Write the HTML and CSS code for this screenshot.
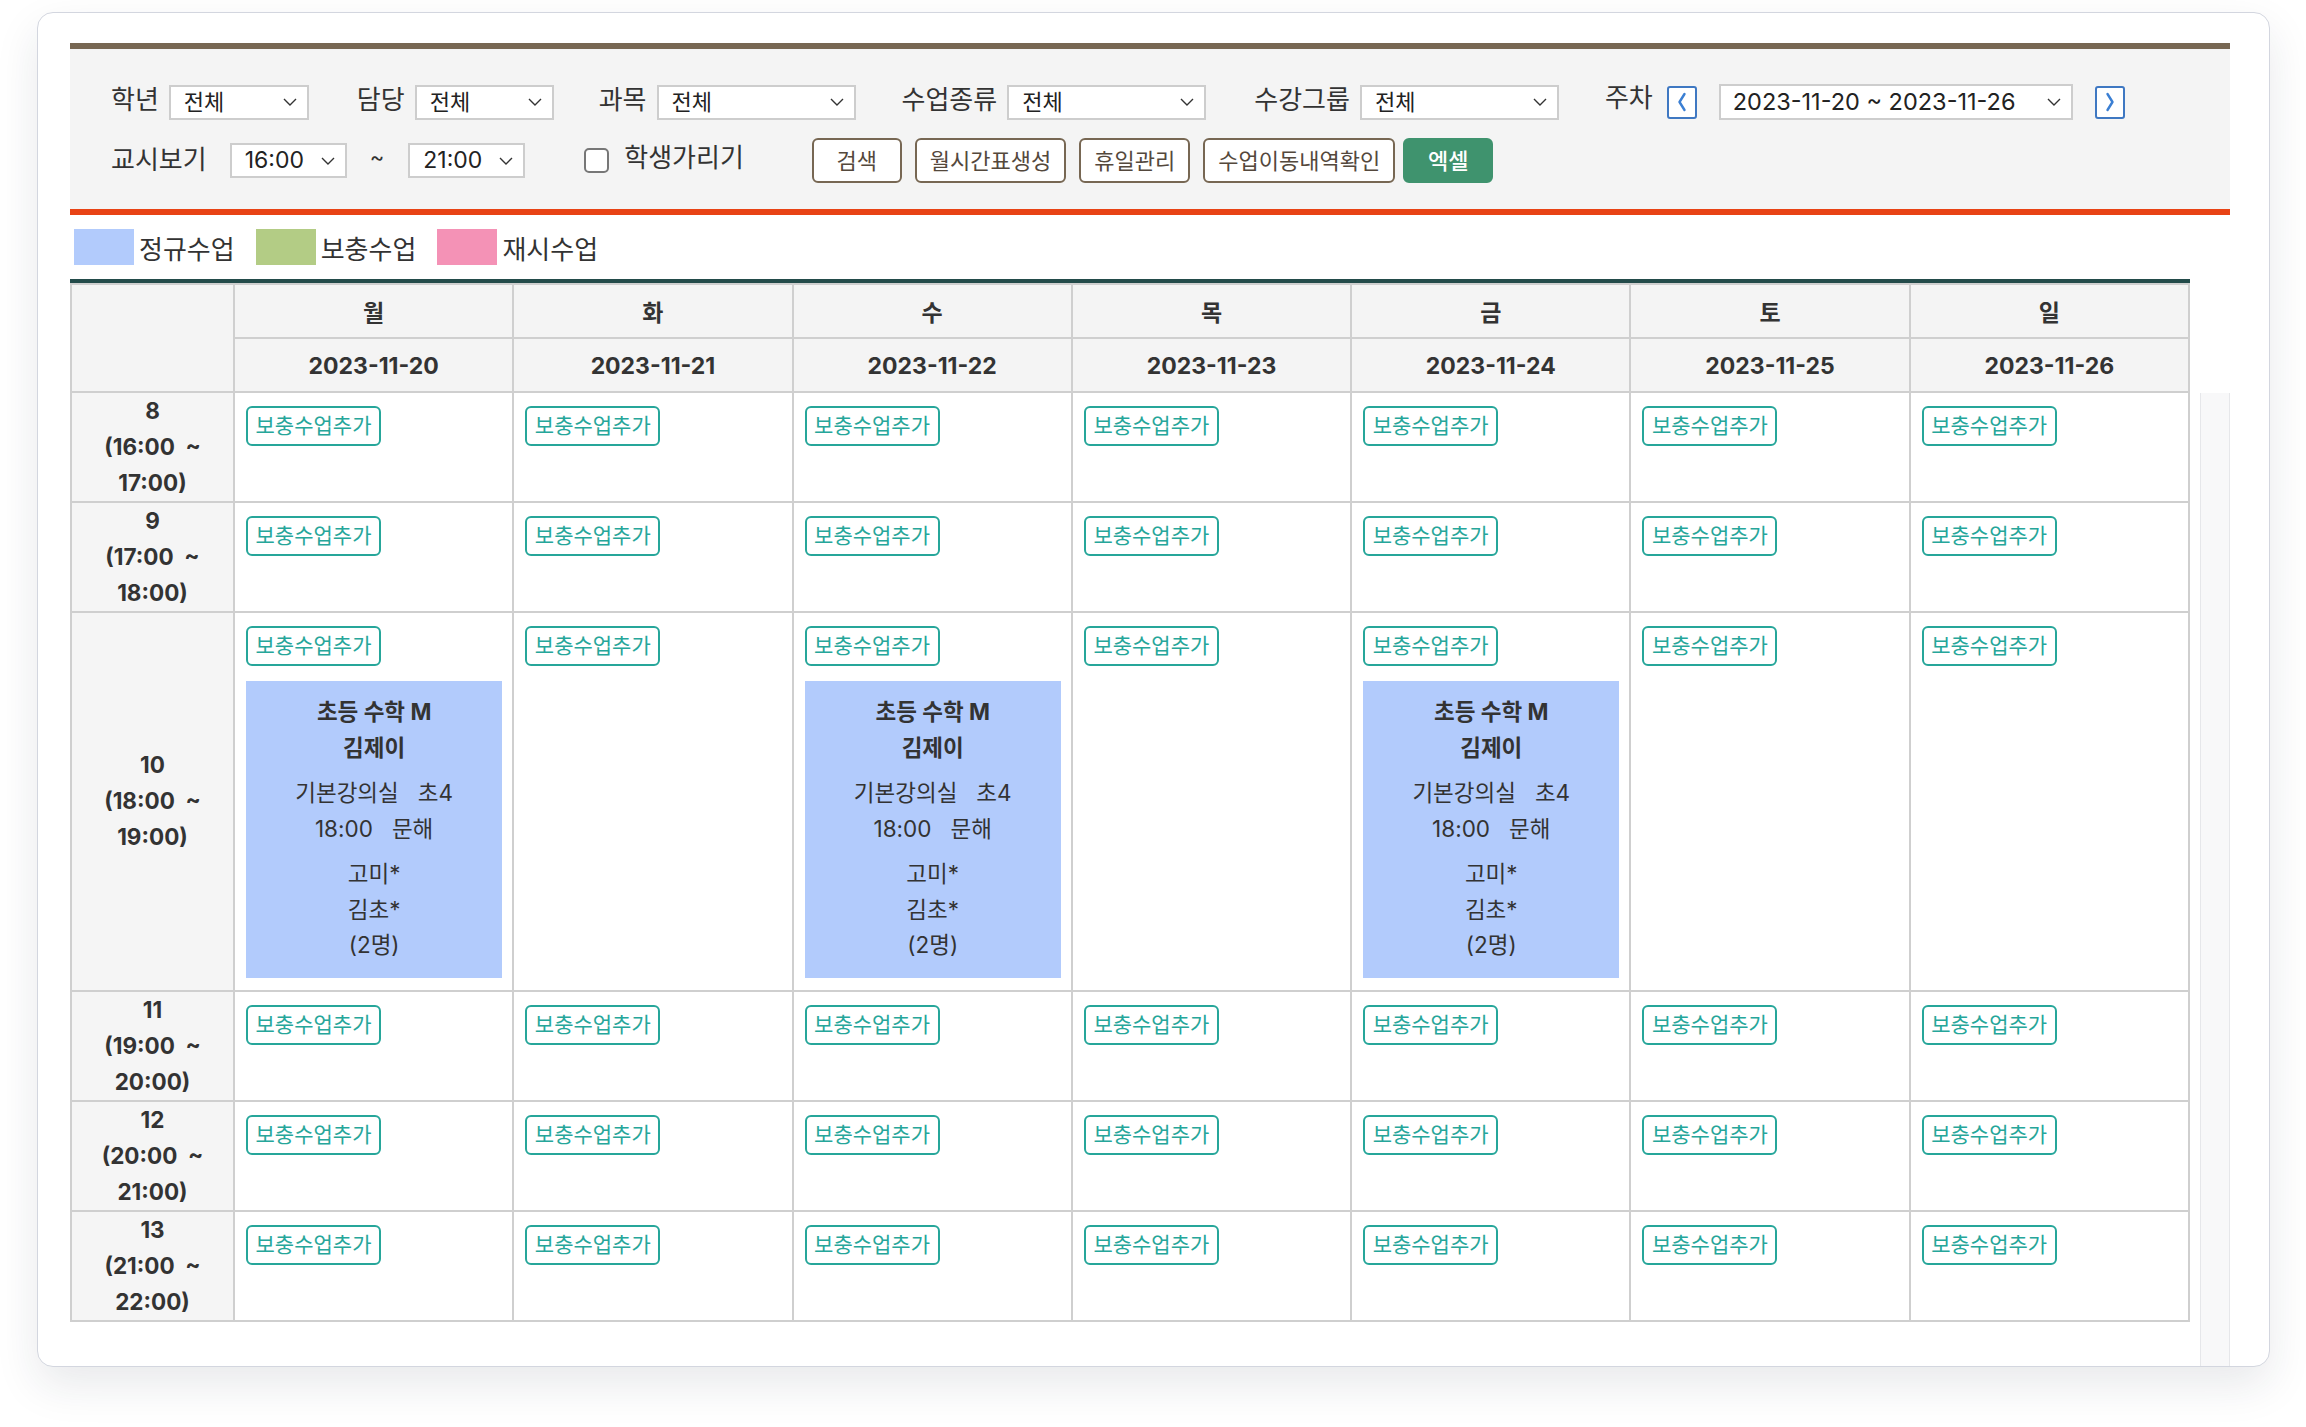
FILE: index.html
```html
<!DOCTYPE html>
<html lang="ko">
<head>
<meta charset="utf-8">
<title>시간표</title>
<link rel="stylesheet" href="styles.css">
</head>
<body>
<div class="card">
  <div class="filter">
    <div class="frow frow1">
      <span class="lbl">학년</span>
      <div class="sel sel-a"><span>전체</span><svg class="chev" viewBox="0 0 14 8"><path d="M1 1 L7 7 L13 1"/></svg></div>
      <span class="lbl">담당</span>
      <div class="sel sel-b"><span>전체</span><svg class="chev" viewBox="0 0 14 8"><path d="M1 1 L7 7 L13 1"/></svg></div>
      <span class="lbl">과목</span>
      <div class="sel sel-c"><span>전체</span><svg class="chev" viewBox="0 0 14 8"><path d="M1 1 L7 7 L13 1"/></svg></div>
      <span class="lbl">수업종류</span>
      <div class="sel sel-c sel-kind"><span>전체</span><svg class="chev" viewBox="0 0 14 8"><path d="M1 1 L7 7 L13 1"/></svg></div>
      <span class="lbl">수강그룹</span>
      <div class="sel sel-c"><span>전체</span><svg class="chev" viewBox="0 0 14 8"><path d="M1 1 L7 7 L13 1"/></svg></div>
      <span class="lbl lbl-week">주차</span>
      <span class="nav nav-prev"><svg viewBox="0 0 10 20"><path d="M7.5 2 L2.5 10 L7.5 18"/></svg></span>
      <div class="sel sel-week"><span>2023-11-20 ~ 2023-11-26</span><svg class="chev" viewBox="0 0 14 8"><path d="M1 1 L7 7 L13 1"/></svg></div>
      <span class="nav nav-next"><svg viewBox="0 0 10 20"><path d="M2.5 2 L7.5 10 L2.5 18"/></svg></span>
    </div>
    <div class="frow frow2">
      <span class="lbl lbl-period">교시보기</span>
      <div class="sel sel-time"><span>16:00</span><svg class="chev" viewBox="0 0 14 8"><path d="M1 1 L7 7 L13 1"/></svg></div>
      <span class="tilde">~</span>
      <div class="sel sel-time"><span>21:00</span><svg class="chev" viewBox="0 0 14 8"><path d="M1 1 L7 7 L13 1"/></svg></div>
      <span class="checkbox"></span>
      <span class="lbl lbl-hide">학생가리기</span>
      <button class="btn">검색</button>
      <button class="btn">월시간표생성</button>
      <button class="btn">휴일관리</button>
      <button class="btn btn-move">수업이동내역확인</button>
      <button class="btn btn-excel">엑셀</button>
    </div>
  </div>

  <div class="legend">
    <span class="swatch sw-blue"></span><span class="legend-text">정규수업</span>
    <span class="swatch sw-green"></span><span class="legend-text">보충수업</span>
    <span class="swatch sw-pink"></span><span class="legend-text">재시수업</span>
  </div>

  <div class="tt">
    <div class="tt-line"></div>
    <table class="tt-head">
      <colgroup><col class="c-time"><col span="7" class="c-day"></colgroup>
      <tr class="hr1">
        <th class="corner" rowspan="2"></th>
        <th>월</th><th>화</th><th>수</th><th>목</th><th>금</th><th>토</th><th>일</th>
      </tr>
      <tr class="hr2">
        <th>2023-11-20</th><th>2023-11-21</th><th>2023-11-22</th><th>2023-11-23</th><th>2023-11-24</th><th>2023-11-25</th><th>2023-11-26</th>
      </tr>
    </table>
    <div class="tt-body">
      <table class="tt-rows">
        <colgroup><col class="c-time"><col span="7" class="c-day"></colgroup>
        <tr>
          <td class="tcell">8<br>(16:00 &nbsp;~<br>17:00)</td>
          <td><span class="add">보충수업추가</span></td>
          <td><span class="add">보충수업추가</span></td>
          <td><span class="add">보충수업추가</span></td>
          <td><span class="add">보충수업추가</span></td>
          <td><span class="add">보충수업추가</span></td>
          <td><span class="add">보충수업추가</span></td>
          <td><span class="add">보충수업추가</span></td>
        </tr>
        <tr>
          <td class="tcell">9<br>(17:00 &nbsp;~<br>18:00)</td>
          <td><span class="add">보충수업추가</span></td>
          <td><span class="add">보충수업추가</span></td>
          <td><span class="add">보충수업추가</span></td>
          <td><span class="add">보충수업추가</span></td>
          <td><span class="add">보충수업추가</span></td>
          <td><span class="add">보충수업추가</span></td>
          <td><span class="add">보충수업추가</span></td>
        </tr>
        <tr>
          <td class="tcell">10<br>(18:00 &nbsp;~<br>19:00)</td>
          <td><span class="add">보충수업추가</span>
            <div class="lesson">
              <div class="l-title">초등 수학 M<br>김제이</div>
              <div class="l-info">기본강의실&nbsp;&nbsp; 초4<br>18:00&nbsp;&nbsp; 문해</div>
              <div class="l-stu">고미*<br>김초*<br>(2명)</div>
            </div>
          </td>
          <td><span class="add">보충수업추가</span></td>
          <td><span class="add">보충수업추가</span>
            <div class="lesson">
              <div class="l-title">초등 수학 M<br>김제이</div>
              <div class="l-info">기본강의실&nbsp;&nbsp; 초4<br>18:00&nbsp;&nbsp; 문해</div>
              <div class="l-stu">고미*<br>김초*<br>(2명)</div>
            </div>
          </td>
          <td><span class="add">보충수업추가</span></td>
          <td><span class="add">보충수업추가</span>
            <div class="lesson">
              <div class="l-title">초등 수학 M<br>김제이</div>
              <div class="l-info">기본강의실&nbsp;&nbsp; 초4<br>18:00&nbsp;&nbsp; 문해</div>
              <div class="l-stu">고미*<br>김초*<br>(2명)</div>
            </div>
          </td>
          <td><span class="add">보충수업추가</span></td>
          <td><span class="add">보충수업추가</span></td>
        </tr>
        <tr>
          <td class="tcell">11<br>(19:00 &nbsp;~<br>20:00)</td>
          <td><span class="add">보충수업추가</span></td>
          <td><span class="add">보충수업추가</span></td>
          <td><span class="add">보충수업추가</span></td>
          <td><span class="add">보충수업추가</span></td>
          <td><span class="add">보충수업추가</span></td>
          <td><span class="add">보충수업추가</span></td>
          <td><span class="add">보충수업추가</span></td>
        </tr>
        <tr>
          <td class="tcell">12<br>(20:00 &nbsp;~<br>21:00)</td>
          <td><span class="add">보충수업추가</span></td>
          <td><span class="add">보충수업추가</span></td>
          <td><span class="add">보충수업추가</span></td>
          <td><span class="add">보충수업추가</span></td>
          <td><span class="add">보충수업추가</span></td>
          <td><span class="add">보충수업추가</span></td>
          <td><span class="add">보충수업추가</span></td>
        </tr>
        <tr>
          <td class="tcell">13<br>(21:00 &nbsp;~<br>22:00)</td>
          <td><span class="add">보충수업추가</span></td>
          <td><span class="add">보충수업추가</span></td>
          <td><span class="add">보충수업추가</span></td>
          <td><span class="add">보충수업추가</span></td>
          <td><span class="add">보충수업추가</span></td>
          <td><span class="add">보충수업추가</span></td>
          <td><span class="add">보충수업추가</span></td>
        </tr>
      </table>
      <div class="track"></div>
    </div>
  </div>
</div>
</body>
</html>
```

FILE: styles.css
```css
* { box-sizing: border-box; }
html, body { margin: 0; padding: 0; background: #fff; }
body {
  font-family: Inter, "Noto Sans CJK KR", sans-serif;
  color: #333;
  width: 2306px;
  height: 1427px;
  overflow: hidden;
}

.card {
  margin: 12px 0 0 37px;
  width: 2233px;
  border: 1px solid #d3d6df;
  border-radius: 16px;
  padding: 30px 39px 0 32px;
  background: #fff;
  box-shadow: 0 18px 44px rgba(30, 35, 60, 0.10);
  overflow: hidden;
}

/* ---------- filter ---------- */
.filter {
  width: 2160px;
  background: #f4f4f4;
  border-top: 6px solid #776753;
  border-bottom: 6px solid #e84315;
  padding: 33px 0 26px 41px;
}
.frow { display: flex; align-items: center; }
.frow1 { height: 40px; }
.frow2 { height: 45px; margin-top: 16px; }

.lbl {
  font-size: 26px;
  color: #333;
  margin-right: 10px;
  line-height: 1;
  position: relative;
  top: -2px;
  white-space: nowrap;
}
.sel {
  height: 35px;
  background: #fff;
  border: 2px solid #cdcdcd;
  display: flex;
  align-items: center;
  justify-content: space-between;
  padding: 0 10px 0 13px;
  font-size: 22px;
  color: #222;
  margin-right: 46px;
  flex: none;
}
.sel span { line-height: 1; white-space: nowrap; }
.chev { width: 14px; height: 8px; flex: none; }
.chev path { fill: none; stroke: #333; stroke-width: 1.4; }
.sel-a { width: 140px; margin-right: 48px; }
.sel-b { width: 139px; margin-right: 45px; }
.sel-c { width: 199px; }
.sel-kind { margin-right: 48px; }
.sel-week { width: 354px; height: 36px; font-size: 23.5px; margin-right: 22px; padding-left: 12px; }
.sel-time { width: 117px; font-size: 23px; margin-right: 0; }

.lbl-week { margin-right: 14px; top: -4px; }
.nav {
  width: 30px;
  height: 33px;
  border: 2px solid #3f78c2;
  border-radius: 3px;
  background: #fff;
  display: flex;
  align-items: center;
  justify-content: center;
  flex: none;
}
.nav svg { width: 10px; height: 20px; }
.nav path { fill: none; stroke: #3b7fd3; stroke-width: 2.4; stroke-linejoin: round; stroke-linecap: round; }
.nav-prev { margin-right: 22px; }

.lbl-period { margin-right: 23px; top: -1px; }
.tilde { font-size: 22px; margin: 0 24px 0 23px; position: relative; top: -4px; }
.checkbox {
  width: 25px;
  height: 25px;
  border: 2px solid #777;
  border-radius: 5px;
  background: #fff;
  margin-left: 59px;
  margin-right: 15px;
  flex: none;
}
.lbl-hide { margin-right: 68px; top: -3px; }

.btn {
  height: 45px;
  min-width: 90px;
  padding: 0 13px;
  border: 2px solid #776753;
  border-radius: 6px;
  background: #fff;
  color: #54483c;
  font-family: inherit;
  font-size: 22px;
  margin-right: 13px;
  line-height: 1;
  flex: none;
}
.btn-move { margin-right: 8px; }
.btn-excel {
  background: #3f936e;
  border-color: #3f936e;
  color: #fff;
  font-weight: 500;
  width: 90px;
}

/* ---------- legend ---------- */
.legend {
  margin-top: 14px;
  height: 36px;
  padding-left: 4px;
  display: flex;
  align-items: center;
}
.swatch { width: 60px; height: 36px; flex: none; }
.sw-blue { background: #b2cbfc; }
.sw-green { background: #b3cc85; }
.sw-pink { background: #f492b6; }
.legend-text {
  font-size: 26px;
  margin: 0 21px 0 5px;
  color: #333;
  line-height: 1;
  position: relative;
  top: 3px;
}

/* ---------- timetable ---------- */
.tt { margin-top: 14px; }
.tt-line { width: 2120px; height: 4px; background: #234b4a; }
.tt-head, .tt-rows {
  width: 2120px;
  border-collapse: collapse;
  table-layout: fixed;
}
.c-time { width: 163px; }
.tt-head th {
  border: 2px solid #cfcfcf;
  background: #f4f4f4;
  font-size: 23px;
  font-weight: 700;
  color: #333;
  height: 54px;
  padding: 0;
}
.tt-head .hr2 th { padding-top: 2px; }
.tt-body { display: flex; gap: 10px; align-items: stretch; }
.tt-rows { margin-bottom: 44px; }
.tt-rows td {
  border: 2px solid #cfcfcf;
  vertical-align: top;
  padding: 13px 10px 12px 11px;
}
.tt-rows tr:first-child td { border-top: none; }
.tt-rows td.tcell {
  background: #f5f5f5;
  text-align: center;
  vertical-align: middle;
  font-weight: 700;
  font-size: 22.5px;
  line-height: 36px;
  padding: 0;
  color: #333;
}
.add {
  display: inline-block;
  width: 135px;
  height: 40px;
  line-height: 36px;
  text-align: center;
  border: 2px solid #26a69a;
  border-radius: 6px;
  color: #26a69a;
  font-size: 21px;
  background: #fff;
  white-space: nowrap;
}
.lesson {
  margin-top: 15px;
  background: #b2cbfc;
  padding: 13px 0 15px;
  text-align: center;
  font-size: 22.5px;
  line-height: 35.5px;
  color: #333;
}
.l-title { font-weight: 700; }
.l-info, .l-stu { margin-top: 10px; }

.track {
  width: 30px;
  background: #f8f8f9;
  border-left: 1px solid #e6e7ea;
  border-right: 1px solid #e6e7ea;
}
```
